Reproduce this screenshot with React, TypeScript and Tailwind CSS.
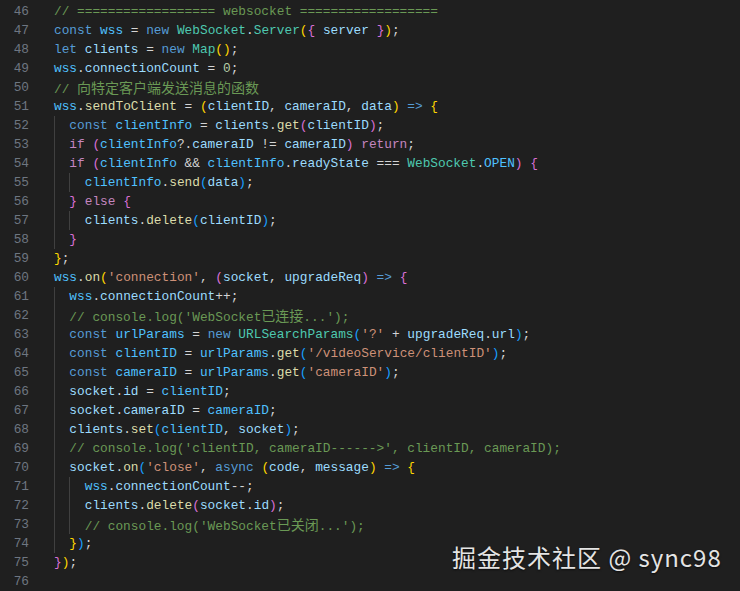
import React from "react";

type Tok = [string, string];

const COLORS: Record<string, string> = {
  k: "text-[#569cd6]",
  c: "text-[#c586c0]",
  v: "text-[#9cdcfe]",
  n: "text-[#4fc1ff]",
  f: "text-[#dcdcaa]",
  t: "text-[#4ec9b0]",
  s: "text-[#ce9178]",
  m: "text-[#b5cea8]",
  p: "text-[#d4d4d4]",
  g: "text-[#6a9955]",
  z: "text-[#6a9955] text-[14px] font-['Noto_Sans_CJK_SC',sans-serif]",
  y: "text-[#ffd700]",
  o: "text-[#da70d6]",
  b: "text-[#179fff]",
};

// [indent level, tokens]
const lines: [number, Tok[]][] = [
  [0, [["g", "// ================== websocket =================="]]],
  [0, [["k", "const"], ["p", " "], ["n", "wss"], ["p", " = "], ["k", "new"], ["p", " "], ["t", "WebSocket"], ["p", "."], ["t", "Server"], ["y", "("], ["o", "{"], ["p", " "], ["v", "server"], ["p", " "], ["o", "}"], ["y", ")"], ["p", ";"]]],
  [0, [["k", "let"], ["p", " "], ["v", "clients"], ["p", " = "], ["k", "new"], ["p", " "], ["t", "Map"], ["y", "()"], ["p", ";"]]],
  [0, [["n", "wss"], ["p", "."], ["v", "connectionCount"], ["p", " = "], ["m", "0"], ["p", ";"]]],
  [0, [["g", "// "], ["z", "向特定客户端发送消息的函数"]]],
  [0, [["n", "wss"], ["p", "."], ["f", "sendToClient"], ["p", " = "], ["y", "("], ["v", "clientID"], ["p", ", "], ["v", "cameraID"], ["p", ", "], ["v", "data"], ["y", ")"], ["p", " "], ["k", "=>"], ["p", " "], ["y", "{"]]],
  [1, [["k", "const"], ["p", " "], ["n", "clientInfo"], ["p", " = "], ["v", "clients"], ["p", "."], ["f", "get"], ["o", "("], ["v", "clientID"], ["o", ")"], ["p", ";"]]],
  [1, [["c", "if"], ["p", " "], ["o", "("], ["n", "clientInfo"], ["p", "?."], ["v", "cameraID"], ["p", " != "], ["v", "cameraID"], ["o", ")"], ["p", " "], ["c", "return"], ["p", ";"]]],
  [1, [["c", "if"], ["p", " "], ["o", "("], ["n", "clientInfo"], ["p", " && "], ["n", "clientInfo"], ["p", "."], ["v", "readyState"], ["p", " === "], ["t", "WebSocket"], ["p", "."], ["n", "OPEN"], ["o", ")"], ["p", " "], ["o", "{"]]],
  [2, [["n", "clientInfo"], ["p", "."], ["f", "send"], ["b", "("], ["v", "data"], ["b", ")"], ["p", ";"]]],
  [1, [["o", "}"], ["p", " "], ["c", "else"], ["p", " "], ["o", "{"]]],
  [2, [["v", "clients"], ["p", "."], ["f", "delete"], ["b", "("], ["v", "clientID"], ["b", ")"], ["p", ";"]]],
  [1, [["o", "}"]]],
  [0, [["y", "}"], ["p", ";"]]],
  [0, [["n", "wss"], ["p", "."], ["f", "on"], ["y", "("], ["s", "'connection'"], ["p", ", "], ["o", "("], ["v", "socket"], ["p", ", "], ["v", "upgradeReq"], ["o", ")"], ["p", " "], ["k", "=>"], ["p", " "], ["o", "{"]]],
  [1, [["n", "wss"], ["p", "."], ["v", "connectionCount"], ["p", "++;"]]],
  [1, [["g", "// console.log('WebSocket"], ["z", "已连接"], ["g", "...');"]]],
  [1, [["k", "const"], ["p", " "], ["n", "urlParams"], ["p", " = "], ["k", "new"], ["p", " "], ["t", "URLSearchParams"], ["b", "("], ["s", "'?'"], ["p", " + "], ["v", "upgradeReq"], ["p", "."], ["v", "url"], ["b", ")"], ["p", ";"]]],
  [1, [["k", "const"], ["p", " "], ["n", "clientID"], ["p", " = "], ["n", "urlParams"], ["p", "."], ["f", "get"], ["b", "("], ["s", "'/videoService/clientID'"], ["b", ")"], ["p", ";"]]],
  [1, [["k", "const"], ["p", " "], ["n", "cameraID"], ["p", " = "], ["n", "urlParams"], ["p", "."], ["f", "get"], ["b", "("], ["s", "'cameraID'"], ["b", ")"], ["p", ";"]]],
  [1, [["v", "socket"], ["p", "."], ["v", "id"], ["p", " = "], ["n", "clientID"], ["p", ";"]]],
  [1, [["v", "socket"], ["p", "."], ["v", "cameraID"], ["p", " = "], ["n", "cameraID"], ["p", ";"]]],
  [1, [["v", "clients"], ["p", "."], ["f", "set"], ["b", "("], ["n", "clientID"], ["p", ", "], ["v", "socket"], ["b", ")"], ["p", ";"]]],
  [1, [["g", "// console.log('clientID, cameraID------>', clientID, cameraID);"]]],
  [1, [["v", "socket"], ["p", "."], ["f", "on"], ["b", "("], ["s", "'close'"], ["p", ", "], ["k", "async"], ["p", " "], ["y", "("], ["v", "code"], ["p", ", "], ["v", "message"], ["y", ")"], ["p", " "], ["k", "=>"], ["p", " "], ["y", "{"]]],
  [2, [["n", "wss"], ["p", "."], ["v", "connectionCount"], ["p", "--;"]]],
  [2, [["v", "clients"], ["p", "."], ["f", "delete"], ["o", "("], ["v", "socket"], ["p", "."], ["v", "id"], ["o", ")"], ["p", ";"]]],
  [2, [["g", "// console.log('WebSocket"], ["z", "已关闭"], ["g", "...');"]]],
  [1, [["y", "}"], ["b", ")"], ["p", ";"]]],
  [0, [["o", "}"], ["y", ")"], ["p", ";"]]],
  [0, []],
];

const App = () => {
  return (
    <div className="relative w-[740px] h-[591px] overflow-hidden bg-[#1f1f1f] pt-[2px] font-['Liberation_Mono','Noto_Sans_CJK_SC',monospace] text-[12.8px] whitespace-pre">
      {lines.map(([indent, toks], i) => (
        <div key={i} className="flex h-[19px] leading-[19px]">
          <span className="w-[29px] text-right text-[#6e7681]">{46 + i}</span>
          <div className="flex pl-[25px]">
            {Array.from({ length: indent }).map((_, j) => (
              <span key={j} className="inline-block w-[15.36px] h-[19px] border-l border-[#404040]" />
            ))}
            <span>
              {toks.map(([c, text], j) => (
                <span key={j} className={COLORS[c]}>
                  {text}
                </span>
              ))}
            </span>
          </div>
        </div>
      ))}
      <div className="absolute left-[452px] top-[541px] leading-[32px] text-[24px] tracking-[1px] text-[#e4e4e4] font-['Noto_Sans_CJK_SC',sans-serif] [text-shadow:0_1px_2px_rgba(0,0,0,0.7)]">
        掘金技术社区 @ sync98
      </div>
    </div>
  );
};

export default App;
